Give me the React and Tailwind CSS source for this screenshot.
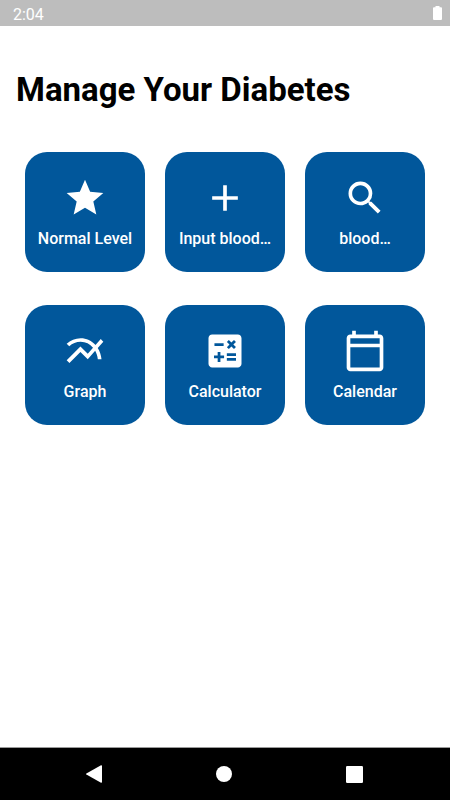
import {
  MdStar,
  MdAdd,
  MdSearch,
  MdMultilineChart,
  MdCalculate,
  MdOutlineCalendarToday,
} from "react-icons/md";

const tiles = [
  { label: "Normal Level", Icon: MdStar },
  { label: "Input blood…", Icon: MdAdd },
  { label: "blood…", Icon: MdSearch },
  { label: "Graph", Icon: MdMultilineChart },
  { label: "Calculator", Icon: MdCalculate },
  { label: "Calendar", Icon: MdOutlineCalendarToday },
];

function StatusBar() {
  return (
    <header className="flex h-[26px] items-center justify-between bg-[#bdbdbd] pr-2 pl-[13px] text-white">
      <span className="pt-1 text-base leading-6">2:04</span>
      <svg className="h-[14px] w-[9px]" viewBox="0 0 9 14" fill="currentColor" aria-hidden="true">
        <path d="M2.5 0h4v1.3H8a1 1 0 0 1 1 1V13a1 1 0 0 1-1 1H1a1 1 0 0 1-1-1V2.3a1 1 0 0 1 1-1h1.5z" />
      </svg>
    </header>
  );
}

function Tile({ label, Icon }) {
  return (
    <button
      type="button"
      className="flex h-[120px] w-[120px] flex-col items-center rounded-[22px] bg-[#01579b] pt-6 text-white"
    >
      <Icon className="size-11" aria-hidden="true" />
      <span className="mt-2 text-base leading-[22px] font-medium whitespace-nowrap">{label}</span>
    </button>
  );
}

function NavBar() {
  return (
    <nav className="flex h-[53px] items-center justify-between border-t border-[#9a9a9a] bg-black px-[86px] text-white">
      <button type="button" aria-label="Back">
        <svg className="h-[18px] w-4" viewBox="0 0 16 18" fill="currentColor">
          <path d="M15 .2Q16 0 16 1v16q0 1-1 .8L.4 9.6Q-.3 9 .4 8.4z" />
        </svg>
      </button>
      <button type="button" aria-label="Home">
        <svg className="size-4" viewBox="0 0 16 16" fill="currentColor">
          <circle cx="8" cy="8" r="8" />
        </svg>
      </button>
      <button type="button" aria-label="Recent apps">
        <svg className="h-[17px] w-[18px]" viewBox="0 0 18 17" fill="currentColor">
          <rect width="17" height="17" rx="1.2" />
        </svg>
      </button>
    </nav>
  );
}

export default function App() {
  return (
    <div className="flex min-h-screen flex-col bg-white font-[Roboto,sans-serif]">
      <StatusBar />
      <main className="flex-1">
        <h1 className="px-4 pt-11 text-[33px] leading-10 font-bold text-black">
          Manage Your Diabetes
        </h1>
        <div className="mt-[42px] grid grid-cols-[repeat(3,120px)] justify-between gap-y-[33px] px-[25px]">
          {tiles.map((tile) => (
            <Tile key={tile.label} {...tile} />
          ))}
        </div>
      </main>
      <NavBar />
    </div>
  );
}
